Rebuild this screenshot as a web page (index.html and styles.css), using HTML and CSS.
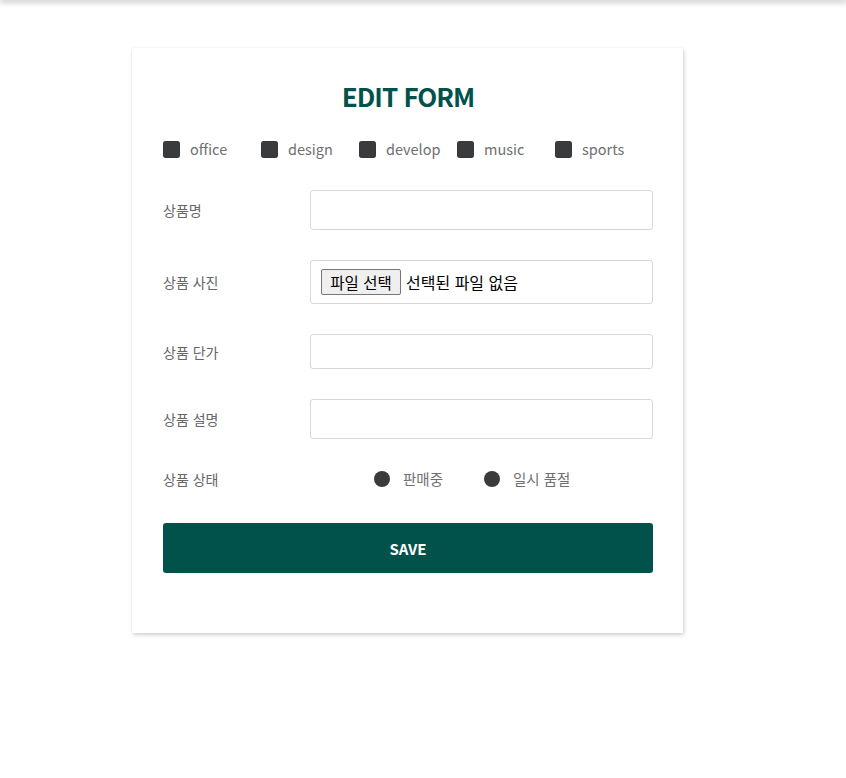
FILE: index.html
```html
<!DOCTYPE html>
<html lang="ko">
<head>
<meta charset="utf-8">
<title>Edit Form</title>
<link rel="stylesheet" href="styles.css">
</head>
<body>
<div class="topbar"></div>
<main class="card">
  <h1 class="title">EDIT FORM</h1>
  <div class="cats">
    <label class="cat"><span class="box"></span><span class="cat-text">office</span></label>
    <label class="cat"><span class="box"></span><span class="cat-text">design</span></label>
    <label class="cat"><span class="box"></span><span class="cat-text">develop</span></label>
    <label class="cat"><span class="box"></span><span class="cat-text">music</span></label>
    <label class="cat"><span class="box"></span><span class="cat-text">sports</span></label>
  </div>
  <div class="row">
    <span class="label">상품명</span>
    <div class="field h40"></div>
  </div>
  <div class="row">
    <span class="label">상품 사진</span>
    <div class="field file h44">
      <span class="file-btn">파일 선택</span>
      <span class="file-text">선택된 파일 없음</span>
    </div>
  </div>
  <div class="row">
    <span class="label">상품 단가</span>
    <div class="field h35"></div>
  </div>
  <div class="row">
    <span class="label">상품 설명</span>
    <div class="field h40"></div>
  </div>
  <div class="row radio-row">
    <span class="label">상품 상태</span>
    <div class="radios">
      <span class="radio"><span class="dot"></span><span class="radio-text">판매중</span></span>
      <span class="radio"><span class="dot"></span><span class="radio-text">일시 품절</span></span>
    </div>
  </div>
  <div class="save">SAVE</div>
</main>
<div class="spacer"></div>
</body>
</html>
```

FILE: styles.css
```css
html, body {
  margin: 0;
  padding: 0;
  background: #ffffff;
}
body {
  font-family: "Noto Sans CJK KR", "Noto Sans", sans-serif;
}
.topbar {
  height: 0;
  box-shadow: 0 0 6px 1px rgba(0, 0, 0, 0.55);
}
.card {
  box-sizing: border-box;
  width: 551px;
  margin: 48px 0 0 132px;
  padding: 31px 30px 60px 31px;
  background: #fff;
  box-shadow: 1px 2px 4px 0 rgba(0, 0, 0, 0.18), 0 0 2px rgba(0, 0, 0, 0.05);
}
.spacer {
  height: 60px;
}
.title {
  margin: 0;
  text-align: center;
  font-size: 26px;
  letter-spacing: -1px;
  line-height: 34px;
  font-weight: 700;
  color: #02524c;
}
.cats {
  display: flex;
  margin-top: 26px;
  height: 20px;
  align-items: center;
}
.cat {
  display: flex;
  align-items: center;
  width: 98px;
}
.box {
  width: 17px;
  height: 17px;
  border-radius: 3px;
  background: #3a3b3d;
  box-shadow: inset 0 0 1px rgba(0,0,0,.6);
}
.cat-text {
  margin-left: 10px;
  font-size: 14.5px;
  color: #6f6f6f;
  position: relative;
  top: -1px;
}
.row {
  display: flex;
  align-items: center;
  margin-top: 30px;
}
.label {
  width: 147px;
  flex: none;
  font-size: 14px;
  color: #666;
}
.field {
  box-sizing: border-box;
  width: 343px;
  border: 1px solid #d4d9dc;
  border-radius: 3px;
  background: #fff;
}
.cats + .row { margin-top: 31px; }
.h40 { height: 40px; }
.h44 { height: 44px; }
.h35 { height: 35px; }
.file {
  display: flex;
  align-items: center;
  padding-left: 10px;
}
.file-btn {
  box-sizing: border-box;
  height: 26px;
  width: 80px;
  display: flex;
  align-items: center;
  justify-content: center;
  background: #efefef;
  border: 1px solid #767676;
  border-radius: 2px;
  font-size: 15.5px;
  color: #000;
}
.file-text {
  margin-left: 5px;
  font-size: 16px;
  color: #000;
}
.radio-row {
  height: 20px;
}
.radios {
  display: flex;
  align-items: center;
  padding-left: 64px;
}
.radio {
  display: flex;
  align-items: center;
  width: 110px;
}
.dot {
  width: 16px;
  height: 16px;
  border-radius: 50%;
  background: #3a3b3d;
}
.radio-text {
  margin-left: 13px;
  font-size: 14.5px;
  color: #6f6f6f;
  position: relative;
  top: -1px;
}
.save {
  margin-top: 34px;
  height: 50px;
  border-radius: 3px;
  background: #02524c;
  color: #fff;
  font-weight: 700;
  font-size: 15px;
  display: flex;
  align-items: center;
  justify-content: center;
}
```
